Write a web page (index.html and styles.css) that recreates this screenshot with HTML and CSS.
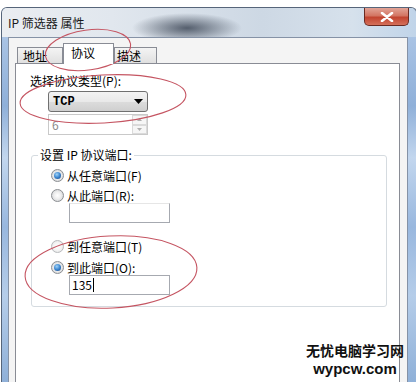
FILE: index.html
```html
<!DOCTYPE html>
<html lang="zh-CN">
<head>
    <meta charset="UTF-8">
    <title>IP 筛选器 属性</title>
    <link rel="stylesheet" href="styles.css">
</head>
<body>
    <div class="window">
        <div class="titlebar">
            <span class="title">IP 筛选器 属性</span>
            <div class="close">
                <svg width="14" height="10" viewBox="0 0 14 10">
                    <path d="M2 1 L12 9 M12 1 L2 9" stroke="#fff" stroke-width="2.6" stroke-linecap="round"/>
                </svg>
            </div>
        </div>
        <div class="frame">
            <div class="glass"></div>
            <div class="dialog">
                <div class="tabs">
                    <div class="tab first">地址</div>
                    <div class="tab active">协议</div>
                    <div class="tab last">描述</div>
                </div>
                <div class="page">
                    <div class="label">选择协议类型(P):</div>
                    <div class="select">
                        <span>TCP</span>
                        <svg width="9" height="5" viewBox="0 0 9 5"><path d="M0 0 H9 L4.5 5 Z" fill="#000"/></svg>
                    </div>
                    <div class="spin">
                        <span>6</span>
                        <div class="spin-btns">
                            <div class="spin-btn"><svg width="5" height="3" viewBox="0 0 5 3"><path d="M0 3 H5 L2.5 0 Z" fill="#b0b0b0"/></svg></div>
                            <div class="spin-btn"><svg width="5" height="3" viewBox="0 0 5 3"><path d="M0 0 H5 L2.5 3 Z" fill="#b0b0b0"/></svg></div>
                        </div>
                    </div>
                    <fieldset class="group">
                        <legend>设置 IP 协议端口:</legend>
                        <div class="radio row1"><span class="dot checked"></span>从任意端口(F)</div>
                        <div class="radio row2"><span class="dot"></span>从此端口(R):</div>
                        <div class="field faint"></div>
                        <div class="radio row3"><span class="dot pale"></span>到任意端口(T)</div>
                        <div class="radio row4"><span class="dot checked"></span>到此端口(O):</div>
                        <div class="field">135<span class="caret"></span></div>
                    </fieldset>
                </div>
            </div>
            <div class="glass right"></div>
        </div>
    </div>

    <!-- red hand-drawn marks over the dialog -->
    <svg class="marks" width="416" height="382" viewBox="0 0 416 382">
        <ellipse cx="88" cy="50" rx="43" ry="20" transform="rotate(-8 88 50)"/>
        <ellipse cx="103" cy="99" rx="83" ry="24" transform="rotate(-3 103 99)"/>
        <ellipse cx="111" cy="272" rx="86" ry="36" transform="rotate(-3 111 272)"/>
    </svg>

    <div class="watermark">
        <div class="wm-cn">无忧电脑学习网</div>
        <div class="wm-en">wypcw.com</div>
    </div>
</body>
</html>
```

FILE: styles.css
```css
body{
    margin: 0;
    background-color: #fff;
    font-family: "Noto Sans CJK SC", "DejaVu Sans", sans-serif;
    font-size: 12px;
    color: #000;
    overflow: hidden;
}
.window{
    margin: 7px 0 0 1px;
    width: 414px;
    height: 374px;
    border: 1px solid #56657a;
    border-bottom: none;
    border-radius: 6px 6px 0 0;
    background: linear-gradient(180deg, #b9cfe8 0, #a6c1e3 40%, #c3d7ee 70%, #9fbbdf 100%);
    display: flex;
    flex-direction: column;
}
.titlebar{
    height: 29px;
    display: flex;
    align-items: flex-start;
    justify-content: space-between;
    border-radius: 5px 5px 0 0;
    background:
        radial-gradient(ellipse 55px 15px at 185px 20px, rgba(52,62,78,0.8), rgba(52,62,78,0)),
        linear-gradient(90deg, #eaedf1 0, #e1e7ee 110px, #cdd8e4 260px, #d6e1ec 350px, #c0d4e9 100%);
}
.title{
    margin: 7px 0 0 6px;
    line-height: 16px;
    color: #1a1a1a;
}
.close{
    width: 43px;
    height: 17px;
    margin-right: 7px;
    border: 1px solid #6a2a22;
    border-top: none;
    border-radius: 0 0 5px 5px;
    background: linear-gradient(180deg, #e2a497 0, #d37563 45%, #c24430 55%, #d4705a 100%);
    display: flex;
    align-items: center;
    justify-content: center;
}
.frame{
    flex: 1;
    display: flex;
}
.glass{
    width: 6px;
    background: linear-gradient(180deg, #a9c3e4 0, #8fb0d9 20%, #c2d6ee 35%, #98b7de 55%, #b5cde9 75%, #8fb0d8 100%);
}
.glass.right{
    width: 8px;
}
.dialog{
    flex: 1;
    display: flex;
    flex-direction: column;
    border: 1px solid #8592a6;
    border-bottom: none;
    background-color: #f4f4f4;
    padding: 5px 7px 0 6px;
}
.tabs{
    display: flex;
    align-items: flex-end;
    padding-left: 2px;
    height: 20px;
}
.tab{
    height: 16px;
    line-height: 15px;
    box-sizing: border-box;
    border: 1px solid #898c95;
    border-bottom: none;
    background: linear-gradient(180deg, #f4f4f4, #e0e0e0);
    padding-left: 5px;
}
.tab.first{
    width: 46px;
}
.tab.active{
    width: 51px;
    height: 21px;
    line-height: 18px;
    padding-left: 7px;
    margin-bottom: -1px;
    background: #fff;
    position: relative;
    z-index: 1;
}
.tab.last{
    width: 43px;
    padding-left: 2px;
}
.page{
    flex: 1;
    border: 1px solid #898c95;
    border-bottom: none;
    background-color: #fff;
    padding: 9px 0 0 14px;
}
.label{
    line-height: 16px;
}
.select{
    margin: 2px 0 0 18px;
    width: 100px;
    height: 21px;
    box-sizing: border-box;
    border: 1px solid #707070;
    border-radius: 3px;
    background: linear-gradient(180deg, #f3f3f3 0, #e9e9e9 50%, #dcdcdc 51%, #cfcfcf 100%);
    display: flex;
    align-items: center;
    justify-content: space-between;
    padding: 0 4px 0 4px;
    font-family: "Liberation Mono", "DejaVu Sans Mono", monospace;
    font-weight: bold;
}
.spin{
    margin: 2px 0 0 18px;
    width: 100px;
    height: 21px;
    box-sizing: border-box;
    border: 1px solid #c9c9c9;
    display: flex;
    justify-content: space-between;
    padding-left: 3px;
    line-height: 19px;
    color: #8a8a8a;
}
.spin-btns{
    width: 15px;
    display: flex;
    flex-direction: column;
}
.spin-btn{
    flex: 1;
    border: 1px solid #dadada;
    background: #f6f6f6;
    display: flex;
    align-items: center;
    justify-content: center;
}
.group{
    margin: 12px 0 0 1px;
    width: 356px;
    box-sizing: border-box;
    border: 1px solid #d5dbe0;
    border-radius: 3px;
    padding: 4px 0 11px 6px;
    min-width: 0;
}
.group legend{
    padding: 0 2px;
    line-height: 16px;
}
.radio{
    display: flex;
    align-items: center;
    height: 16px;
    margin-left: 13px;
}
.row2{ margin-top: 4px; }
.row3{ margin-top: 15px; }
.row4{ margin-top: 5px; }
.dot{
    width: 13px;
    height: 13px;
    box-sizing: border-box;
    border-radius: 50%;
    border: 1px solid #8b8e92;
    background: radial-gradient(circle at 50% 50%, #ffffff 0, #f0f0f0 40%, #c9cbcd 100%);
    margin-right: 3px;
    display: flex;
    align-items: center;
    justify-content: center;
}
.dot.pale{
    border-color: #b8babd;
    background: radial-gradient(circle, #fff 0, #f4f4f4 50%, #dcdcdc 100%);
}
.dot.checked::after{
    content: "";
    width: 7px;
    height: 7px;
    border-radius: 50%;
    background: radial-gradient(circle at 40% 35%, #9fd3f7 0, #3c86d0 50%, #173f7a 100%);
}
.field{
    margin-left: 31px;
    width: 101px;
    height: 20px;
    box-sizing: border-box;
    border: 1px solid #a6a9b0;
    padding-left: 2px;
    line-height: 18px;
    display: flex;
    align-items: center;
}
.field.faint{
    border-top-color: #e6e6e6;
}
.caret{
    width: 1px;
    height: 14px;
    background-color: #000;
    margin-left: 1px;
}
.marks{
    position: absolute;
    left: 0;
    top: 0;
    pointer-events: none;
}
.marks ellipse{
    fill: none;
    stroke: #c55562;
    stroke-width: 1.1;
}
.watermark{
    position: absolute;
    left: 305px;
    top: 341px;
    width: 100px;
    text-align: center;
    font-weight: bold;
    color: #111;
}
.wm-cn{
    font-size: 14px;
    line-height: 18px;
}
.wm-en{
    margin-top: 3px;
    font-family: "Liberation Sans", Arial, sans-serif;
    font-size: 15px;
    line-height: 14px;
}
```
